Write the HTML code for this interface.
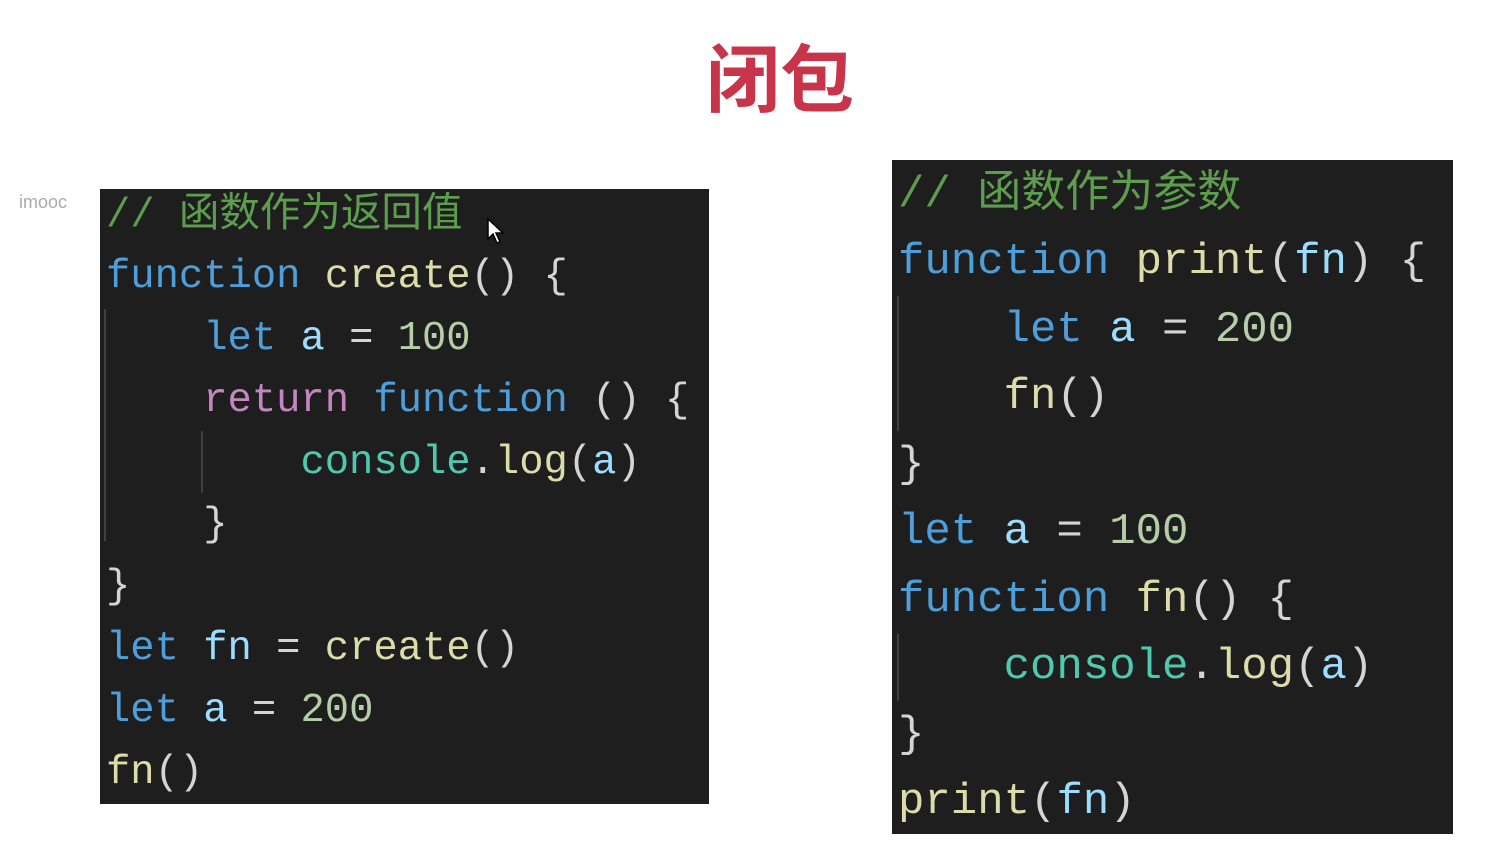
<!DOCTYPE html>
<html><head><meta charset="utf-8"><style>
body{margin:0;width:1510px;height:850px;background:#fff;position:relative;overflow:hidden;font-family:"Liberation Sans","Noto Sans CJK SC",sans-serif}
.title{position:absolute;left:706px;top:30px;font-size:74px;font-weight:bold;color:#c8354a;line-height:90px;font-family:"Noto Sans CJK SC",sans-serif;letter-spacing:0}
.imooc{position:absolute;left:19px;top:192px;font-size:18px;color:#aaa}
.p{position:absolute;background:#1e1e1e;overflow:hidden}
.l{position:absolute;white-space:pre;font-family:"Liberation Mono","Noto Sans CJK SC",monospace}
.k{color:#4e9fd9}.f{color:#dcdcaa}.v{color:#9cdcfe}.n{color:#b5cea8}.c{color:#5d9e4e;font-family:"Liberation Mono","Noto Sans CJK SC",monospace}.r{color:#c586c0}.t{color:#4ec9b0}.o{color:#d4d4d4}
.g{position:absolute;width:2px;background:#404040}
</style></head><body>
<div class="title">闭包</div>
<div class="imooc">imooc</div>

<div class="p" style="left:100px;top:189px;width:609px;height:615px;font-size:40.5px">
<div class="g" style="left:4px;top:120px;height:232px"></div>
<div class="g" style="left:101px;top:242px;height:62px"></div>
<div class="l" style="left:6px;top:-4px;line-height:62px"><span class="c">// 函数作为返回值</span></div>
<div class="l o" style="left:6px;top:57px;line-height:62px"><span class="k">function</span> <span class="f">create</span>() {</div>
<div class="l o" style="left:6px;top:119px;line-height:62px">    <span class="k">let</span> <span class="v">a</span> = <span class="n">100</span></div>
<div class="l o" style="left:6px;top:181px;line-height:62px">    <span class="r">return</span> <span class="k">function</span> () {</div>
<div class="l o" style="left:6px;top:243px;line-height:62px">        <span class="t">console</span>.<span class="f">log</span>(<span class="v">a</span>)</div>
<div class="l o" style="left:6px;top:305px;line-height:62px">    }</div>
<div class="l o" style="left:6px;top:367px;line-height:62px">}</div>
<div class="l o" style="left:6px;top:429px;line-height:62px"><span class="k">let</span> <span class="v">fn</span> = <span class="f">create</span>()</div>
<div class="l o" style="left:6px;top:491px;line-height:62px"><span class="k">let</span> <span class="v">a</span> = <span class="n">200</span></div>
<div class="l o" style="left:6px;top:553px;line-height:62px"><span class="f">fn</span>()</div>
</div>

<div class="p" style="left:892px;top:160px;width:561px;height:674px;font-size:44px">
<div class="g" style="left:5px;top:136px;height:135px"></div>
<div class="g" style="left:5px;top:474px;height:67px"></div>
<div class="l" style="left:6px;top:2px;line-height:67.5px"><span class="c">// 函数作为参数</span></div>
<div class="l o" style="left:6px;top:69px;line-height:67.5px"><span class="k">function</span> <span class="f">print</span>(<span class="v">fn</span>) {</div>
<div class="l o" style="left:6px;top:137px;line-height:67.5px">    <span class="k">let</span> <span class="v">a</span> = <span class="n">200</span></div>
<div class="l o" style="left:6px;top:204px;line-height:67.5px">    <span class="f">fn</span>()</div>
<div class="l o" style="left:6px;top:272px;line-height:67.5px">}</div>
<div class="l o" style="left:6px;top:339px;line-height:67.5px"><span class="k">let</span> <span class="v">a</span> = <span class="n">100</span></div>
<div class="l o" style="left:6px;top:407px;line-height:67.5px"><span class="k">function</span> <span class="f">fn</span>() {</div>
<div class="l o" style="left:6px;top:474px;line-height:67.5px">    <span class="t">console</span>.<span class="f">log</span>(<span class="v">a</span>)</div>
<div class="l o" style="left:6px;top:542px;line-height:67.5px">}</div>
<div class="l o" style="left:6px;top:609px;line-height:67.5px"><span class="f">print</span>(<span class="v">fn</span>)</div>
</div>

<svg style="position:absolute;left:486px;top:217px" width="20" height="28" viewBox="0 0 20 28"><path d="M2 2 L2 22 L7 17 L11 26 L14 24.5 L10 16 L17 16 Z" fill="#fff" stroke="#000" stroke-width="1.5"/></svg>
</body></html>
